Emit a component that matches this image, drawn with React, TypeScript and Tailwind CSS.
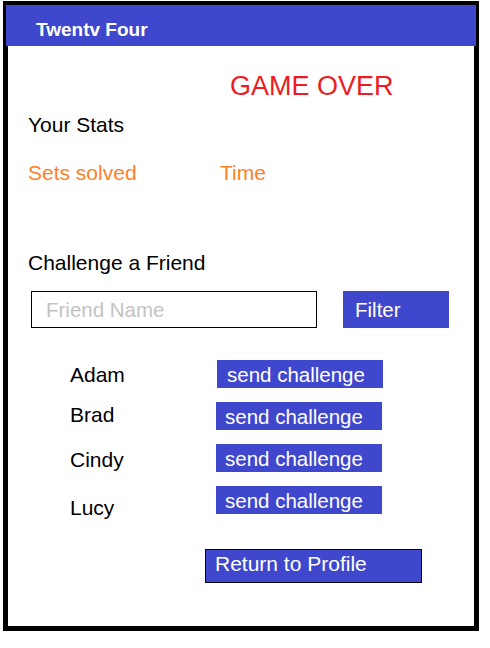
import React from 'react';

const FRIENDS = [
  { name: 'Adam', nameTop: 'mt-[3px]', nameW: 'w-[147px]', btnPad: 'pl-[10px]' },
  { name: 'Brad', nameTop: 'mt-[1px]', nameW: 'w-[146px]', btnPad: 'pl-[9px]' },
  { name: 'Cindy', nameTop: 'mt-[4px]', nameW: 'w-[146px]', btnPad: 'pl-[9px]' },
  { name: 'Lucy', nameTop: 'mt-[10px]', nameW: 'w-[146px]', btnPad: 'pl-[9px]' },
];

export default function App() {
  return (
    <div className="w-[490px] h-[648px] bg-white font-['Liberation_Sans',Arial,sans-serif] pt-[1px] pl-[3px]">
      <div className="w-[476px] h-[630px] border-black border-l-[5px] border-r-[5px] border-t-4 border-b-[5px] flex flex-col">
        {/* Header */}
        <div className="-mx-[2px] h-[41px] bg-[#3f48cc] pl-[30px] pt-[14px]">
          <span className="text-white font-bold text-[19px] leading-[21px]">Twentv Four</span>
        </div>

        <p className="mt-[25px] pl-[222px] text-[27px] leading-[31px] text-[#ed1c24]">GAME OVER</p>

        <p className="mt-[11px] pl-[20px] text-[21px] leading-[24px] text-black">Your Stats</p>

        <div className="mt-[24px] pl-[20px] flex text-[21px] leading-[24px] text-[#ff7f27]">
          <span className="w-[192px]">Sets solved</span>
          <span>Time</span>
        </div>

        <p className="mt-[66px] pl-[20px] text-[21px] leading-[24px] text-black">Challenge a Friend</p>

        {/* Search */}
        <div className="mt-[16px] ml-[23px] flex gap-[26px]">
          <input
            placeholder="Friend Name"
            className="w-[286px] h-[37px] border border-black px-[14px] text-[20.5px] leading-[23px] text-black placeholder:text-[#c3c3c3] outline-none"
          />
          <button className="w-[106px] h-[37px] bg-[#3f48cc] text-white text-left pl-[12px] text-[20.5px] leading-[23px]">
            Filter
          </button>
        </div>

        {/* Friends */}
        <div className="mt-[32px] ml-[62px] flex flex-col gap-[14px]">
          {FRIENDS.map(f => (
            <div key={f.name} className="flex items-start h-[28px]">
              <span className={`${f.nameW} ${f.nameTop} text-[21px] leading-[24px] text-black`}>{f.name}</span>
              <button className={`w-[166px] h-[28px] bg-[#3f48cc] text-white text-left ${f.btnPad} pt-[1px] text-[20.5px] leading-[23px] whitespace-nowrap`}>
                send challenge
              </button>
            </div>
          ))}
        </div>

        <div className="mt-[35px] ml-[197px]">
          <button className="w-[217px] h-[34px] bg-[#3f48cc] border border-black text-white text-left pl-[9px] pt-[2px] text-[21px] leading-[24px] flex items-start">
            Return to Profile
          </button>
        </div>
      </div>
    </div>
  );
}
